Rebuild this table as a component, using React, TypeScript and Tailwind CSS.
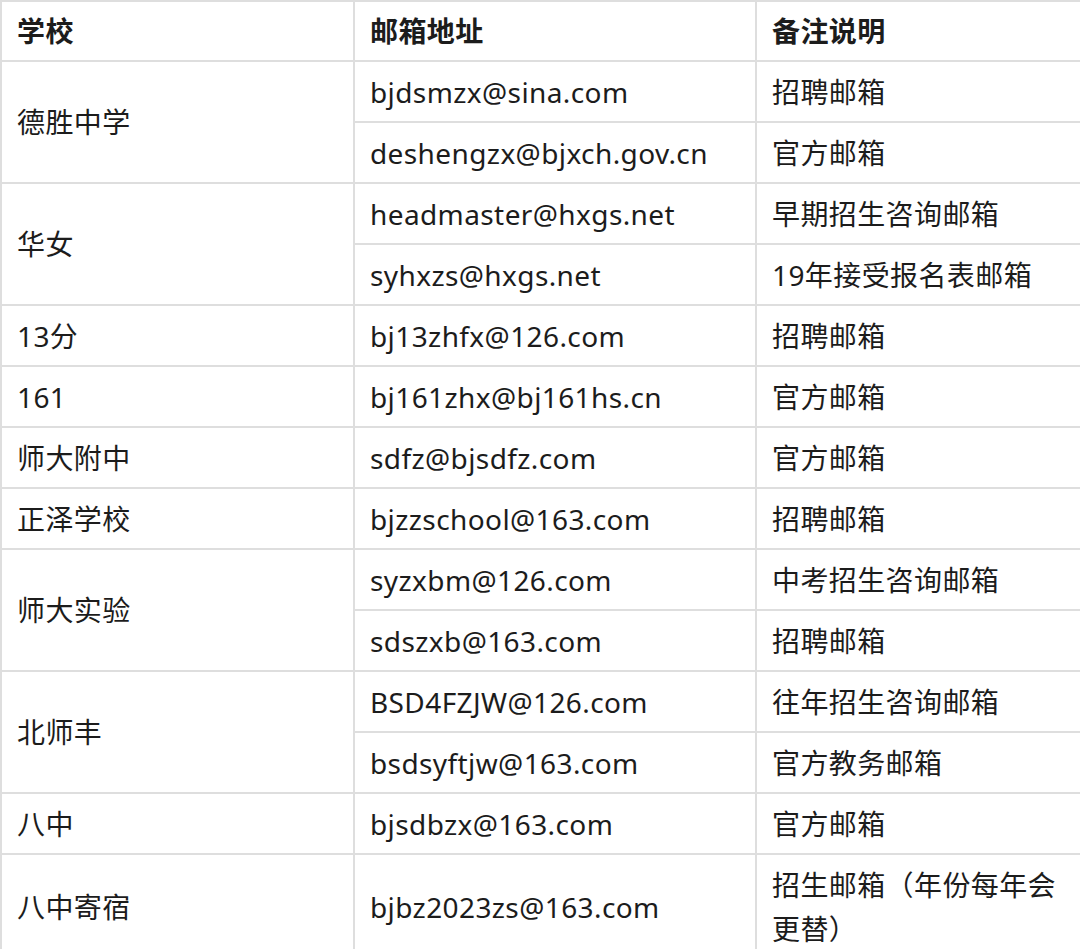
import React from "react";

type Row = { school?: string; span?: number; email: string; note: string };

const rows: Row[] = [
  { school: "德胜中学", span: 2, email: "bjdsmzx@sina.com", note: "招聘邮箱" },
  { email: "deshengzx@bjxch.gov.cn", note: "官方邮箱" },
  { school: "华女", span: 2, email: "headmaster@hxgs.net", note: "早期招生咨询邮箱" },
  { email: "syhxzs@hxgs.net", note: "19年接受报名表邮箱" },
  { school: "13分", email: "bj13zhfx@126.com", note: "招聘邮箱" },
  { school: "161", email: "bj161zhx@bj161hs.cn", note: "官方邮箱" },
  { school: "师大附中", email: "sdfz@bjsdfz.com", note: "官方邮箱" },
  { school: "正泽学校", email: "bjzzschool@163.com", note: "招聘邮箱" },
  { school: "师大实验", span: 2, email: "syzxbm@126.com", note: "中考招生咨询邮箱" },
  { email: "sdszxb@163.com", note: "招聘邮箱" },
  { school: "北师丰", span: 2, email: "BSD4FZJW@126.com", note: "往年招生咨询邮箱" },
  { email: "bsdsyftjw@163.com", note: "官方教务邮箱" },
  { school: "八中", email: "bjsdbzx@163.com", note: "官方邮箱" },
  { school: "八中寄宿", email: "bjbz2023zs@163.com", note: "招生邮箱（年份每年会更替）" },
];

const cell = "border-2 border-[#dedede] pl-[15px] pr-[14px] py-[7.5px] align-middle";
const head = "border-2 border-[#dedede] pl-[15px] pr-[14px] pt-[6.5px] pb-[7.5px] align-middle text-left font-bold";

export default function App() {
  return (
    <div
      className="bg-white text-[#1c1c1c] text-[28px] leading-[44px] tracking-[0.4px]"
      style={{ fontFamily: '"Noto Sans", "Noto Sans CJK SC", sans-serif' }}
    >
      <table className="w-[1080px] table-fixed border-collapse">
        <colgroup>
          <col className="w-[353px]" />
          <col className="w-[402px]" />
          <col className="w-[325px]" />
        </colgroup>
        <thead>
          <tr>
            <th className={head}>学校</th>
            <th className={head}>邮箱地址</th>
            <th className={head}>备注说明</th>
          </tr>
        </thead>
        <tbody>
          {rows.map((r, i) => (
            <tr key={i}>
              {r.school && (
                <td className={cell} rowSpan={r.span || 1}>
                  {r.school}
                </td>
              )}
              <td className={cell}>{r.email}</td>
              <td className={cell}>{r.note}</td>
            </tr>
          ))}
        </tbody>
      </table>
    </div>
  );
}
